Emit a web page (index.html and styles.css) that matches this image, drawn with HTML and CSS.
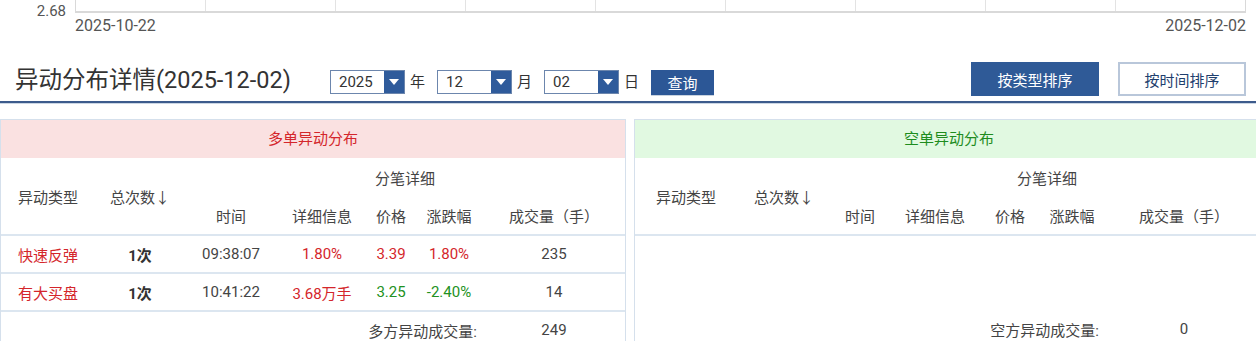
FILE: index.html
```html
<!DOCTYPE html>
<html lang="zh-CN">

<head>
    <meta charset="UTF-8">
    <meta name="viewport" content="width=device-width, initial-scale=1.0">
    <title>异动分布详情</title>

    <link rel="stylesheet" href="styles.css">
</head>

<body>
    <!-- bottom edge of the price chart above -->
    <div class="chart">
        <div class="chart-row">
            <span class="y-label">2.68</span>
            <div class="plot">
                <div class="cell"></div><div class="cell"></div><div class="cell"></div>
                <div class="cell"></div><div class="cell"></div><div class="cell"></div>
                <div class="cell"></div><div class="cell"></div><div class="cell"></div>
            </div>
        </div>
        <div class="x-labels">
            <span>2025-10-22</span>
            <span>2025-12-02</span>
        </div>
    </div>

    <div class="toolbar">
        <h2 class="title">异动分布详情(2025-12-02)</h2>

        <div class="select"><span class="value">2025</span><span class="arrow"><svg width="10" height="6" viewBox="0 0 10 6"><path d="M0 0H10L5 6Z" fill="#fff"/></svg></span></div>
        <span class="unit">年</span>
        <div class="select"><span class="value">12</span><span class="arrow"><svg width="10" height="6" viewBox="0 0 10 6"><path d="M0 0H10L5 6Z" fill="#fff"/></svg></span></div>
        <span class="unit">月</span>
        <div class="select"><span class="value">02</span><span class="arrow"><svg width="10" height="6" viewBox="0 0 10 6"><path d="M0 0H10L5 6Z" fill="#fff"/></svg></span></div>
        <span class="unit">日</span>
        <button type="button" class="query-button">查询</button>

        <div class="sort-buttons">
            <button type="button" class="sort-button active">按类型排序</button>
            <button type="button" class="sort-button">按时间排序</button>
        </div>
    </div>

    <div class="panels">
        <div class="panel panel-long">
            <div class="panel-head">多单异动分布</div>
            <table class="detail">
                <colgroup>
                    <col style="width: 94px">
                    <col style="width: 90px">
                    <col style="width: 92px">
                    <col style="width: 90px">
                    <col style="width: 48px">
                    <col style="width: 68px">
                    <col>
                </colgroup>
                <thead>
                    <tr>
                        <th rowspan="2">异动类型</th>
                        <th rowspan="2">总次数↓</th>
                        <th colspan="5">分笔详细</th>
                    </tr>
                    <tr>
                        <th>时间</th>
                        <th>详细信息</th>
                        <th>价格</th>
                        <th>涨跌幅</th>
                        <th>成交量（手）</th>
                    </tr>
                </thead>
                <tbody>
                    <tr>
                        <td class="red">快速反弹</td>
                        <td class="count">1次</td>
                        <td>09:38:07</td>
                        <td class="red">1.80%</td>
                        <td class="red">3.39</td>
                        <td class="red">1.80%</td>
                        <td>235</td>
                    </tr>
                    <tr>
                        <td class="red">有大买盘</td>
                        <td class="count">1次</td>
                        <td>10:41:22</td>
                        <td class="red">3.68万手</td>
                        <td class="green">3.25</td>
                        <td class="green">-2.40%</td>
                        <td>14</td>
                    </tr>
                    <tr class="total">
                        <td colspan="6" class="total-label">多方异动成交量:</td>
                        <td>249</td>
                    </tr>
                </tbody>
            </table>
        </div>

        <div class="panel panel-short">
            <div class="panel-head">空单异动分布</div>
            <table class="detail">
                <colgroup>
                    <col style="width: 102px">
                    <col style="width: 94px">
                    <col style="width: 58px">
                    <col style="width: 92px">
                    <col style="width: 58px">
                    <col style="width: 66px">
                    <col>
                </colgroup>
                <thead>
                    <tr>
                        <th rowspan="2">异动类型</th>
                        <th rowspan="2">总次数↓</th>
                        <th colspan="5">分笔详细</th>
                    </tr>
                    <tr>
                        <th>时间</th>
                        <th>详细信息</th>
                        <th>价格</th>
                        <th>涨跌幅</th>
                        <th>成交量（手）</th>
                    </tr>
                </thead>
                <tbody>
                    <tr class="empty">
                        <td colspan="7"></td>
                    </tr>
                    <tr class="total">
                        <td colspan="6" class="total-label">空方异动成交量:</td>
                        <td>0</td>
                    </tr>
                </tbody>
            </table>
        </div>
    </div>
</body>

</html>
```

FILE: styles.css
```css
body {
    margin: 0;
    padding: 0;
    background-color: #fff;
    color: #333;
    font-family: Roboto, "Noto Sans CJK SC", sans-serif;
    font-size: 15px;
    overflow: hidden;
}

/* chart strip */
.chart {
    height: 40px;
}

.chart-row {
    display: flex;
    height: 13px;
}

.y-label {
    width: 66px;
    margin-right: 9px;
    text-align: right;
    color: #555;
    font-size: 15px;
    line-height: 22px;
}

.plot {
    display: flex;
    border-left: 1px solid #d9d9d9;
    border-bottom: 2px solid #d9d9d9;
}

.cell {
    width: 129px;
    border-right: 1px solid #e3e3e3;
}

.cell:last-child {
    border-right-color: #d9d9d9;
}

.x-labels {
    display: flex;
    justify-content: space-between;
    width: 1171px;
    margin-left: 75px;
    color: #555;
    font-size: 16px;
    line-height: 26px;
}

/* toolbar */
.toolbar {
    display: flex;
    align-items: flex-end;
    height: 56px;
    padding-bottom: 5px;
    border-bottom: 2px solid #3d5b8c;
    box-shadow: 0 1px 0 #cbd6e4;
}

.title {
    flex: 0 0 330px;
    box-sizing: border-box;
    margin: 0 0 1px 0;
    padding-left: 15px;
    font-size: 23.5px;
    font-weight: normal;
    line-height: 30px;
    color: #333;
}

.select {
    display: flex;
    width: 75px;
    height: 24px;
    box-sizing: border-box;
    border: 1px solid #6c86ad;
    margin-bottom: 2px;
}

.select .value {
    flex: 1;
    padding-left: 8px;
    line-height: 22px;
    font-size: 15px;
    color: #333;
}

.select .arrow {
    width: 20px;
    background-color: #2f5b9b;
    display: flex;
    align-items: center;
    justify-content: center;
}

.unit {
    margin: 0 12px 2px 5px;
    line-height: 24px;
    color: #333;
}

.query-button {
    width: 63px;
    height: 25px;
    margin: 0 0 1px 0;
    padding: 0;
    border: none;
    background-color: #2c5796;
    color: #fff;
    font-family: inherit;
    font-size: 15px;
    box-shadow: 0 1px 0 #c9d3df;
}

.sort-buttons {
    display: flex;
    gap: 19px;
    margin-left: auto;
    margin-right: 10px;
}

.sort-button {
    width: 128px;
    height: 34px;
    padding: 0;
    border: 2px solid #b9c7da;
    background-color: #fff;
    color: #1f3f6e;
    font-family: inherit;
    font-size: 15px;
}

.sort-button.active {
    border-color: #2f5a97;
    background-color: #2f5a97;
    color: #fff;
}

/* distribution panels */
.panels {
    display: flex;
    gap: 8px;
    margin-top: 16px;
}

.panel {
    box-sizing: border-box;
    border: 1px solid #d5e0ec;
    flex-shrink: 0;
}

.panel-long {
    width: 626px;
}

.panel-short {
    width: 630px;
}

.panel-head {
    height: 38px;
    line-height: 38px;
    text-align: center;
}

.panel-long .panel-head {
    background-color: #fae1e1;
    color: #d4262b;
}

.panel-short .panel-head {
    background-color: #e1f9e1;
    color: #1e8c1e;
}

.detail {
    width: 100%;
    table-layout: fixed;
    border-collapse: collapse;
}

.detail th {
    height: 38px;
    padding: 0;
    font-weight: normal;
    color: #444;
    text-align: center;
}

.detail td {
    height: 36px;
    padding: 0;
    border-top: 2px solid #dce6f0;
    text-align: center;
    color: #444;
}

.detail .red {
    color: #d4262b;
}

.detail .green {
    color: #229122;
}

.detail .count {
    font-weight: bold;
    color: #333;
}

.detail .empty td {
    height: 74px;
}

.detail .total-label {
    text-align: right;
    padding-right: 6px;
}

.panel-short .detail .total td {
    border-top: none;
    height: 38px;
}
```
